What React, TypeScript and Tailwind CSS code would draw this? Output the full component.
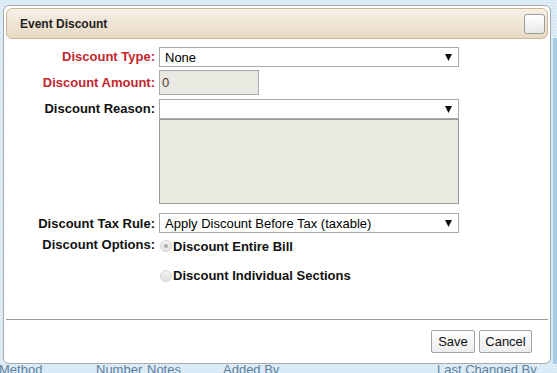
import React from 'react';

const FONT = "font-['Liberation_Sans',Arial,sans-serif]";

const Arrow = () => (
  <svg width="7" height="7" viewBox="0 0 7 7" className="shrink-0">
    <polygon points="0,0 7,0 3.5,7" fill="#111" />
  </svg>
);

const Select: React.FC<{ value?: string; className?: string }> = ({ value = '', className = '' }) => (
  <div className={`w-[300px] h-[20px] border border-[#a9a9a9] bg-white flex items-center justify-between pl-[5px] pr-[6px] text-[13px] text-black ${className}`}>
    <span className="leading-none">{value}</span>
    <Arrow />
  </div>
);

const Radio: React.FC<{ checked?: boolean }> = ({ checked }) => (
  <span className="w-[12px] h-[12px] rounded-full border border-[#d4d4d4] bg-[linear-gradient(#f4f4f4,#e2e2e2)] flex items-center justify-center shrink-0">
    {checked && <span className="w-[4px] h-[4px] rounded-full bg-[#a8a8a8]" />}
  </span>
);

const Label: React.FC<{ children: React.ReactNode; red?: boolean; h: string }> = ({ children, red, h }) => (
  <div className={`w-[149px] text-right font-bold text-[13px] ${h} ${red ? 'text-[#c3262e]' : 'text-[#111]'}`}>
    {children}
  </div>
);

export default function App() {
  return (
    <div className={`w-[557px] h-[373px] overflow-hidden bg-[#d9eaf7] bg-[radial-gradient(#eef6fc_1px,transparent_1px)] [background-size:3px_3px] ${FONT}`}>
      <div className="flex items-start pt-[5px]">
        {/* dialog */}
        <div className="relative z-10 ml-[3px] w-[548px] h-[359px] border border-[#a8a8a8] rounded-[6px] bg-white p-[2px] flex flex-col">
          <div className="h-[31px] rounded-[6px] border border-[#cbb797] bg-[linear-gradient(#f6f0e6,#e8dac4)] flex items-center justify-between pl-[13px] pr-[2px]">
            <span className="font-bold text-[12px] text-[#222]">Event Discount</span>
            <button className="w-[21px] h-[20px] rounded-[3px] border border-[#9c9c9c] bg-[linear-gradient(#ffffff,#e8e8e8)]" />
          </div>

          {/* form */}
          <div className="flex items-center mt-[8px]">
            <Label red h="leading-[20px]">Discount Type:</Label>
            <Select value="None" className="ml-[4px]" />
          </div>

          <div className="flex items-center mt-[3px]">
            <Label red h="leading-[25px]">Discount Amount:</Label>
            <div className="ml-[4px] w-[100px] h-[25px] border border-[#a9a9a9] bg-[#e9e8e1] pl-[2px] text-[13px] leading-[23px] text-[#4f4030]">0</div>
          </div>

          <div className="flex items-start mt-[4px]">
            <Label h="leading-[19px]">Discount Reason:</Label>
            <div className="ml-[4px] flex flex-col">
              <Select className="h-[19px]" />
              <div className="w-[300px] h-[85px] border border-[#9b9b9b] bg-[#e9e8e1]" />
            </div>
          </div>

          <div className="flex items-center mt-[9px]">
            <Label h="leading-[19px]">Discount Tax Rule:</Label>
            <Select value="Apply Discount Before Tax (taxable)" className="ml-[4px] h-[19px]" />
          </div>

          <div className="flex items-center mt-[6px]">
            <Label h="leading-[14px] -mt-[2px]">Discount Options:</Label>
            <div className="ml-[5px] flex items-center gap-[1px] h-[14px]">
              <Radio checked />
              <span className="font-bold text-[13px] text-[#111] leading-[14px] mt-[2px]">Discount Entire Bill</span>
            </div>
          </div>

          <div className="flex items-center mt-[16px] ml-[154px] gap-[1px] h-[14px]">
            <Radio />
            <span className="font-bold text-[13px] text-[#111] leading-[14px]">Discount Individual Sections</span>
          </div>

          <div className="mt-[36px] h-px bg-[#9c9c9c]" />

          <div className="mt-[10px] flex justify-end gap-[4px] pr-[16px]">
            <button className="w-[44px] h-[23px] rounded-[2px] border border-[#a3a3a3] bg-[linear-gradient(#ffffff,#ececec)] text-[13px] text-[#111]">Save</button>
            <button className="w-[53px] h-[23px] rounded-[2px] border border-[#a3a3a3] bg-[linear-gradient(#ffffff,#ececec)] text-[13px] text-[#111]">Cancel</button>
          </div>
        </div>

        {/* page column peeking out on the right */}
        <div className="ml-[2px] mt-[33px] w-[4px] h-[326px] bg-[#a8cbe6]" />
      </div>

      {/* page table header behind dialog */}
      <div className="-mt-[2px] flex text-[13px] leading-[15px] text-[#5f7f9c] whitespace-nowrap">
        <span className="w-[97px] -ml-[1px]">Method</span>
        <span className="w-[51px]">Number</span>
        <span className="w-[76px]">Notes</span>
        <span className="w-[214px]">Added By</span>
        <span>Last Changed By</span>
      </div>
    </div>
  );
}
